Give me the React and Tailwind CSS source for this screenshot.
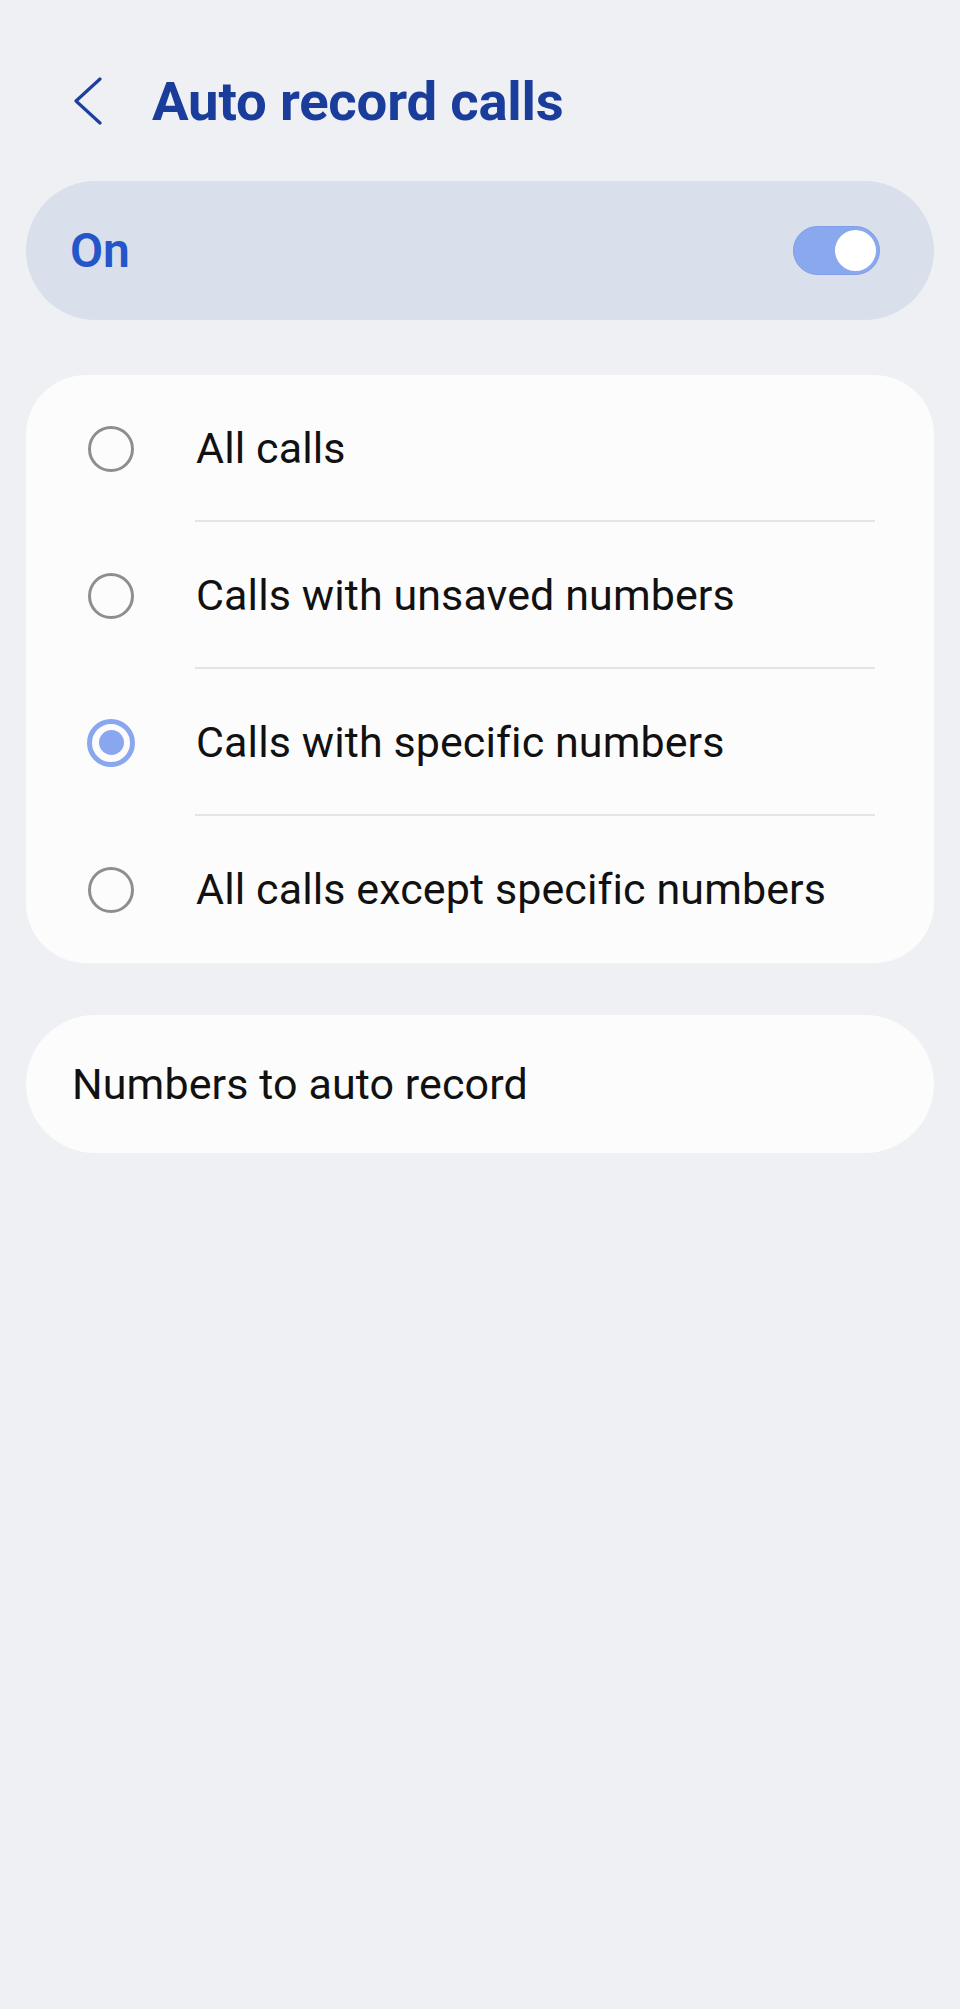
import React from "react";

const options = [
  { label: "All calls", selected: false },
  { label: "Calls with unsaved numbers", selected: false },
  { label: "Calls with specific numbers", selected: true },
  { label: "All calls except specific numbers", selected: false },
];

function Radio({ selected }) {
  if (selected) {
    return (
      <div className="flex h-[48px] w-[48px] items-center justify-center rounded-full border-[5px] border-[#89a7ef]">
        <div className="h-[25px] w-[25px] rounded-full bg-[#89a7ef]" />
      </div>
    );
  }
  return <div className="h-[46px] w-[46px] rounded-full border-[3px] border-[#8e8e8e]" />;
}

export default function App() {
  return (
    <div
      className="min-h-[2009px] w-full bg-[#eff0f4] pt-[56px] pb-px text-[#111111]"
      style={{ fontFamily: "Roboto, 'Noto Sans', sans-serif" }}
    >
      <div className="flex h-[90px] items-center pl-[73px]">
        <svg width="30" height="48" viewBox="0 0 30 48" fill="none" className="shrink-0">
          <path d="M27 2 L3 24 L27 46" stroke="#1e3f9d" strokeWidth="3.2" strokeLinecap="round" strokeLinejoin="round" />
        </svg>
        <h1 className="ml-[49px] text-[54.5px] font-bold leading-none text-[#1a3d9c] tracking-[-0.2px]">
          Auto record calls
        </h1>
      </div>

      <div className="mx-[26px] mt-[35px] flex h-[139px] items-center justify-between rounded-full bg-[#d9e0eb] pl-[44px] pr-[54px]">
        <span className="text-[48px] font-semibold leading-none text-[#2456c9]">On</span>
        <div className="flex h-[49px] w-[87px] items-center justify-end rounded-full border border-[#7f9ee6] bg-[#8aa8ee] pr-[3px]">
          <div className="h-[41px] w-[41px] rounded-full bg-white" />
        </div>
      </div>

      <div className="mx-[26px] mt-[55px] rounded-[60px] bg-[#fcfcfc]">
        {options.map((o, i) => (
          <div key={o.label} className="relative flex h-[147px] items-center pl-[61px]">
            <div className="flex w-[48px] shrink-0 items-center justify-center">
              <Radio selected={o.selected} />
            </div>
            <span className="ml-[61px] text-[43px] leading-none text-[#111111] tracking-[0.1px]">{o.label}</span>
            {i < options.length - 1 && (
              <div className="absolute bottom-0 left-[169px] right-[59px] h-[2px] bg-[#e4e4e6]" />
            )}
          </div>
        ))}
      </div>

      <div className="mx-[26px] mt-[52px] flex h-[138px] items-center rounded-full bg-[#fcfcfc] pl-[46px]">
        <span className="text-[43px] leading-none text-[#111111] tracking-[0.1px]">Numbers to auto record</span>
      </div>
    </div>
  );
}
